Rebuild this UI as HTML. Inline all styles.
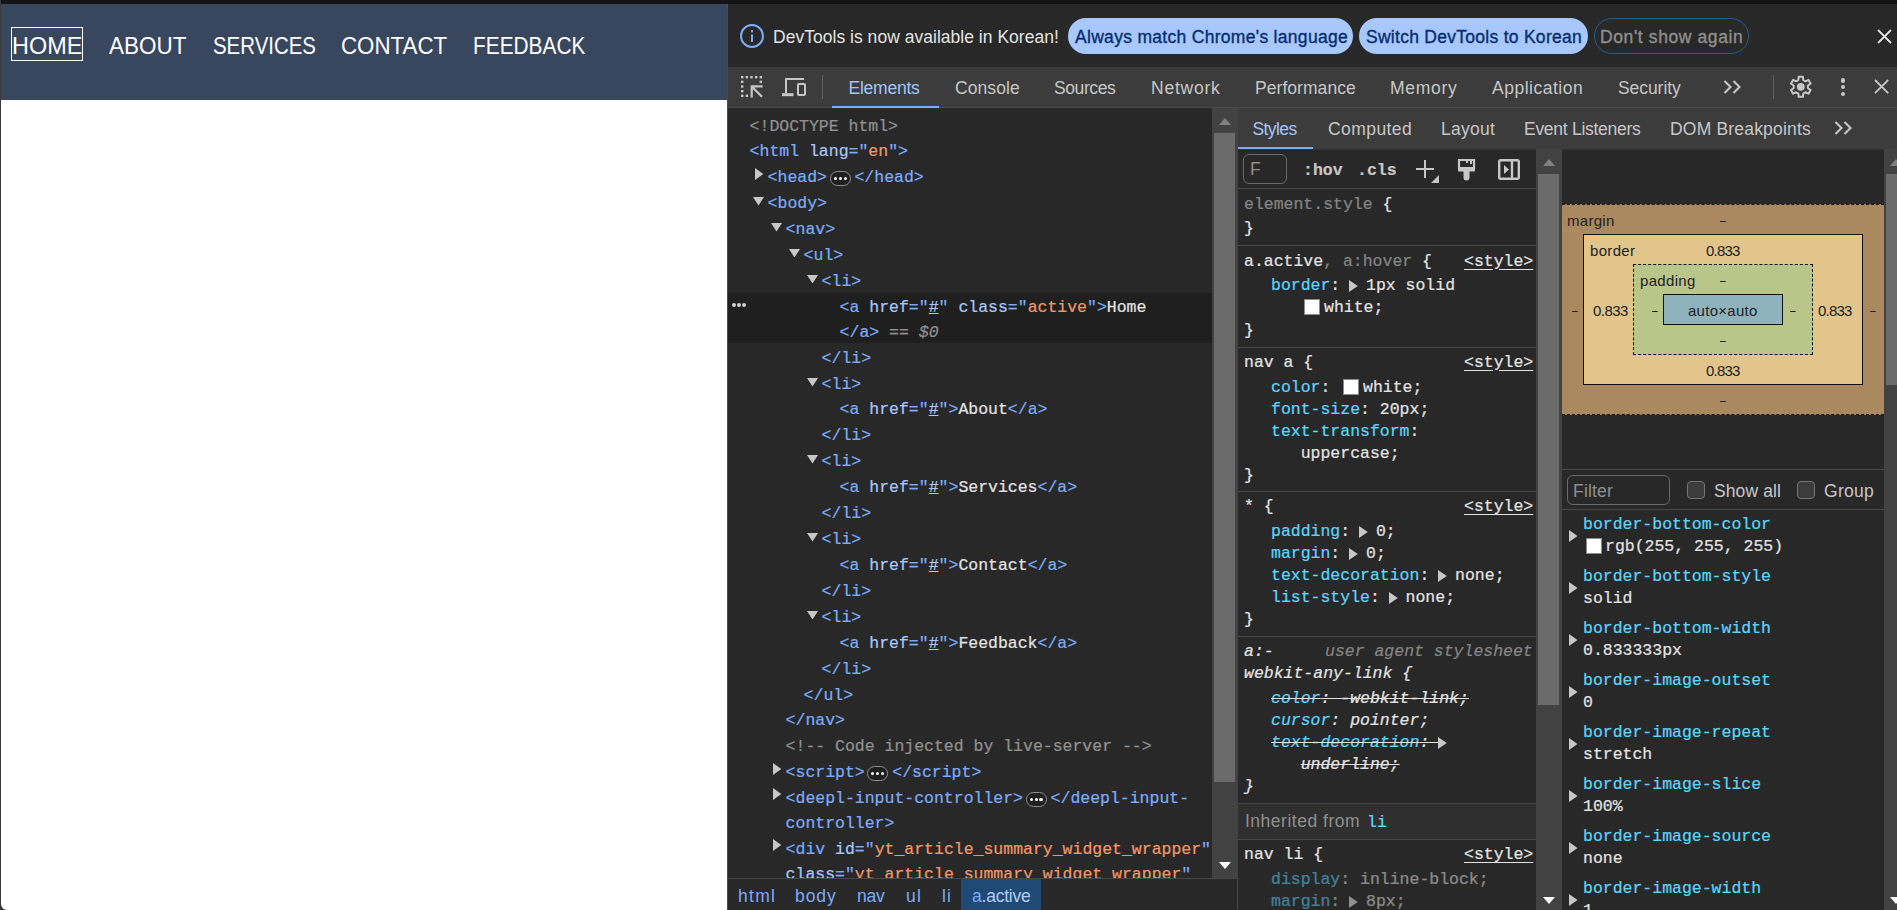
<!DOCTYPE html>
<html lang="en"><head><meta charset="utf-8"><title>Navbar - DevTools</title>
<style>
html,body{margin:0;padding:0;background:#282828;overflow:hidden;}
#r{position:relative;width:1897px;height:910px;overflow:hidden;background:#282828;}
#r div,#r svg{position:absolute;}
#r div.u,#r div.m{white-space:pre;line-height:0;}
#r div.u{font-family:"Liberation Sans", sans-serif;}
#r div.m{font-family:"Liberation Mono", monospace;-webkit-text-stroke:0.22px;}
#r span{white-space:pre;}
</style></head><body><div id="r">
<div style="left:0px;top:0px;width:1897px;height:4px;background:#141414;"></div>
<div style="left:1px;top:4px;width:726px;height:96px;background:#38475e;"></div>
<div style="left:0px;top:900px;width:8px;height:10px;background:#333333;"></div>
<div style="left:1px;top:100px;width:726px;height:810px;background:#ffffff;border-bottom-left-radius:6px;"></div>
<div style="left:0px;top:0px;width:1px;height:910px;background:#3a3a3a;"></div>
<div id="t1" class="u" style="left:11.92px;top:45.68px;font-size:24px;color:#ffffff;transform:scaleX(0.976);transform-origin:0 0;">HOME</div>
<div id="t2" class="u" style="left:109.30px;top:45.68px;font-size:24px;color:#ffffff;transform:scaleX(0.936);transform-origin:0 0;">ABOUT</div>
<div id="t3" class="u" style="left:212.55px;top:45.68px;font-size:24px;color:#ffffff;transform:scaleX(0.851);transform-origin:0 0;">SERVICES</div>
<div id="t4" class="u" style="left:340.57px;top:45.68px;font-size:24px;color:#ffffff;transform:scaleX(0.929);transform-origin:0 0;">CONTACT</div>
<div id="t5" class="u" style="left:472.93px;top:45.68px;font-size:24px;color:#ffffff;transform:scaleX(0.869);transform-origin:0 0;">FEEDBACK</div>
<div style="left:11px;top:27px;width:72px;height:34px;border:1px solid #fff;box-sizing:border-box;"></div>
<div style="left:727px;top:4px;width:1170px;height:906px;background:#282828;"></div>
<div style="left:727px;top:4px;width:1px;height:906px;background:#4a4a4a;"></div>
<svg style="left:739px;top:23px;" width="26" height="26" viewBox="0 0 26 26"><circle cx="13" cy="13" r="11" fill="none" stroke="#7cacf8" stroke-width="2"/><rect x="12" y="11.5" width="2" height="7.5" fill="#7cacf8"/><rect x="12" y="7" width="2" height="2.4" fill="#7cacf8"/></svg>
<div id="t6" class="u" style="left:773.00px;top:36.94px;font-size:17.5px;color:#e3e3e3;letter-spacing:0.024px;">DevTools is now available in Korean!</div>
<div style="left:1068px;top:18px;width:285px;height:36px;background:#a8c7fa;border-radius:18px;"></div>
<div id="t7" class="u" style="left:1075.00px;top:36.94px;font-size:17.5px;color:#062e6f;letter-spacing:0.300px;-webkit-text-stroke:0.35px #062e6f;">Always match Chrome&#x27;s language</div>
<div style="left:1359px;top:18px;width:229px;height:36px;background:#a8c7fa;border-radius:18px;"></div>
<div id="t8" class="u" style="left:1366.00px;top:36.94px;font-size:17.5px;color:#062e6f;letter-spacing:0.275px;-webkit-text-stroke:0.35px #062e6f;">Switch DevTools to Korean</div>
<div style="left:1594px;top:18px;width:155px;height:36px;border-radius:18px;border:1px solid #1d5f96;box-sizing:border-box;"></div>
<div id="t9" class="u" style="left:1600.00px;top:36.94px;font-size:17.5px;color:#8f8f8f;letter-spacing:0.602px;-webkit-text-stroke:0.35px #8f8f8f;">Don&#x27;t show again</div>
<svg style="left:1877.0px;top:29.0px;" width="15.0" height="15.0" viewBox="0 0 15.0 15.0"><path d="M1 1 L14.0 14.0 M14.0 1 L1 14.0" stroke="#e3e3e3" stroke-width="1.8" fill="none"/></svg>
<div style="left:728px;top:67px;width:1169px;height:40px;background:#3c3c3c;"></div>
<div style="left:728px;top:107px;width:1169px;height:1px;background:#4a4a4a;"></div>
<svg style="left:741.2px;top:76.4px;" width="23" height="23" viewBox="0 0 23 23"><rect x="0.00" y="0.00" width="2.4" height="2.4" fill="#c7c7c7"/><rect x="4.65" y="0.00" width="2.4" height="2.4" fill="#c7c7c7"/><rect x="9.30" y="0.00" width="2.4" height="2.4" fill="#c7c7c7"/><rect x="13.95" y="0.00" width="2.4" height="2.4" fill="#c7c7c7"/><rect x="18.60" y="0.00" width="2.4" height="2.4" fill="#c7c7c7"/><rect x="0.00" y="4.65" width="2.4" height="2.4" fill="#c7c7c7"/><rect x="0.00" y="9.30" width="2.4" height="2.4" fill="#c7c7c7"/><rect x="0.00" y="13.95" width="2.4" height="2.4" fill="#c7c7c7"/><rect x="0.00" y="18.60" width="2.4" height="2.4" fill="#c7c7c7"/><rect x="18.60" y="4.65" width="2.4" height="2.4" fill="#c7c7c7"/><rect x="4.65" y="18.60" width="2.4" height="2.4" fill="#c7c7c7"/><path d="M9.6 10.4 H21.6 M10.7 9.3 V21.4 M10.7 10.4 L21 20.8" fill="none" stroke="#c7c7c7" stroke-width="2.2"/></svg>
<svg style="left:782px;top:77px;" width="25" height="21" viewBox="0 0 25 21"><path d="M4 16 V2 H22" fill="none" stroke="#c7c7c7" stroke-width="2"/><path d="M0 17.7 H11.5" stroke="#c7c7c7" stroke-width="3"/>
<rect x="16" y="7" width="7" height="11" rx="1" fill="none" stroke="#c7c7c7" stroke-width="2"/></svg>
<div style="left:822px;top:75px;width:1px;height:24px;background:#5e5e5e;"></div>
<div id="t10" class="u" style="left:848.50px;top:87.94px;font-size:17.5px;color:#a4c4fa;letter-spacing:-0.243px;">Elements</div>
<div id="t11" class="u" style="left:955.00px;top:87.94px;font-size:17.5px;color:#c7c7c7;letter-spacing:0.088px;">Console</div>
<div id="t12" class="u" style="left:1054.00px;top:87.94px;font-size:17.5px;color:#c7c7c7;letter-spacing:-0.408px;">Sources</div>
<div id="t13" class="u" style="left:1151.00px;top:87.94px;font-size:17.5px;color:#c7c7c7;letter-spacing:0.762px;">Network</div>
<div id="t14" class="u" style="left:1255.00px;top:87.94px;font-size:17.5px;color:#c7c7c7;letter-spacing:0.055px;">Performance</div>
<div id="t15" class="u" style="left:1390.00px;top:87.94px;font-size:17.5px;color:#c7c7c7;letter-spacing:0.710px;">Memory</div>
<div id="t16" class="u" style="left:1492.00px;top:87.94px;font-size:17.5px;color:#c7c7c7;letter-spacing:0.512px;">Application</div>
<div id="t17" class="u" style="left:1618.00px;top:87.94px;font-size:17.5px;color:#c7c7c7;letter-spacing:-0.066px;">Security</div>
<div style="left:832px;top:105.5px;width:107px;height:2.5px;background:#7cacf8;"></div>
<svg style="left:1723px;top:80px;" width="19" height="14" viewBox="0 0 19 14"><path d="M1.5 1 L7.5 7 L1.5 13 M10.5 1 L16.5 7 L10.5 13" fill="none" stroke="#c7c7c7" stroke-width="2.1"/></svg>
<div style="left:1773px;top:75px;width:1px;height:24px;background:#5e5e5e;"></div>
<svg style="left:1789.2px;top:75.2px;" width="23.6" height="23.6" viewBox="0 0 23.6 23.6"><path d="M9.40 5.00 L9.65 1.73 L13.95 1.73 L14.20 5.00 L16.48 6.32 L19.45 4.90 L21.60 8.62 L18.89 10.48 L18.89 13.12 L21.60 14.98 L19.45 18.70 L16.48 17.28 L14.20 18.60 L13.95 21.87 L9.65 21.87 L9.40 18.60 L7.12 17.28 L4.15 18.70 L2.00 14.98 L4.71 13.12 L4.71 10.48 L2.00 8.62 L4.15 4.90 L7.12 6.32 Z" fill="none" stroke="#c7c7c7" stroke-width="2" stroke-linejoin="round"/><circle cx="11.8" cy="11.8" r="3.9" fill="#c7c7c7"/></svg>
<div style="left:1840.8px;top:78.2px;width:4.4px;height:4.4px;background:#c7c7c7;border-radius:50%;"></div>
<div style="left:1840.8px;top:84.89999999999999px;width:4.4px;height:4.4px;background:#c7c7c7;border-radius:50%;"></div>
<div style="left:1840.8px;top:91.6px;width:4.4px;height:4.4px;background:#c7c7c7;border-radius:50%;"></div>
<svg style="left:1874.4px;top:79.4px;" width="15.2" height="15.2" viewBox="0 0 15.2 15.2"><path d="M1 1 L14.2 14.2 M14.2 1 L1 14.2" stroke="#c7c7c7" stroke-width="1.8" fill="none"/></svg>
<div style="left:728px;top:293px;width:484px;height:49.6px;background:#1f1f1f;"></div>
<div style="left:731.6px;top:303px;width:4px;height:4px;background:#d0d0d0;border-radius:50%;"></div>
<div style="left:737.0px;top:303px;width:4px;height:4px;background:#d0d0d0;border-radius:50%;"></div>
<div style="left:742.4px;top:303px;width:4px;height:4px;background:#d0d0d0;border-radius:50%;"></div>
<div id="t18" class="m" style="left:749.6px;top:126.60px;font-size:16.49px;color:#e3e3e3;"><span style="color:#919191">&lt;!DOCTYPE html&gt;</span></div>
<div id="t19" class="m" style="left:749.6px;top:152.46px;font-size:16.49px;color:#e3e3e3;"><span style="color:#7cacf8">&lt;html </span><span style="color:#a8c7fa">lang</span><span style="color:#7cacf8">=&quot;</span><span style="color:#ee9868">en</span><span style="color:#7cacf8">&quot;&gt;</span></div>
<div id="t20" class="m" style="left:767.6px;top:178.32px;font-size:16.49px;color:#e3e3e3;"><span style="color:#7cacf8">&lt;head&gt;</span></div>
<svg style="left:755px;top:167.52px;" width="9" height="12" viewBox="0 0 9 12"><path d="M0 0 L8.3 6 L0 12 Z" fill="#c7c7c7"/></svg>
<div style="left:830px;top:170.72px;width:21px;height:15px;background:#1f1f1f;border:1px solid #8f8f8f;border-radius:8px;box-sizing:border-box;"></div>
<div style="left:834.0px;top:176.62px;width:3.2px;height:3.2px;background:#ffffff;border-radius:50%;"></div>
<div style="left:838.9px;top:176.62px;width:3.2px;height:3.2px;background:#ffffff;border-radius:50%;"></div>
<div style="left:843.8px;top:176.62px;width:3.2px;height:3.2px;background:#ffffff;border-radius:50%;"></div>
<div id="t21" class="m" style="left:854.476px;top:178.32px;font-size:16.49px;color:#e3e3e3;"><span style="color:#7cacf8">&lt;/head&gt;</span></div>
<div id="t22" class="m" style="left:767.6px;top:204.18px;font-size:16.49px;color:#e3e3e3;"><span style="color:#7cacf8">&lt;body&gt;</span></div>
<svg style="left:753px;top:197.18px;" width="11" height="8.5" viewBox="0 0 11 8.5"><path d="M0 0 L11 0 L5.5 8.5 Z" fill="#c7c7c7"/></svg>
<div id="t23" class="m" style="left:785.6px;top:230.04px;font-size:16.49px;color:#e3e3e3;"><span style="color:#7cacf8">&lt;nav&gt;</span></div>
<svg style="left:771px;top:223.04000000000002px;" width="11" height="8.5" viewBox="0 0 11 8.5"><path d="M0 0 L11 0 L5.5 8.5 Z" fill="#c7c7c7"/></svg>
<div id="t24" class="m" style="left:803.6px;top:255.90px;font-size:16.49px;color:#e3e3e3;"><span style="color:#7cacf8">&lt;ul&gt;</span></div>
<svg style="left:789px;top:248.90000000000003px;" width="11" height="8.5" viewBox="0 0 11 8.5"><path d="M0 0 L11 0 L5.5 8.5 Z" fill="#c7c7c7"/></svg>
<div id="t25" class="m" style="left:821.6px;top:281.76px;font-size:16.49px;color:#e3e3e3;"><span style="color:#7cacf8">&lt;li&gt;</span></div>
<svg style="left:807px;top:274.76px;" width="11" height="8.5" viewBox="0 0 11 8.5"><path d="M0 0 L11 0 L5.5 8.5 Z" fill="#c7c7c7"/></svg>
<div id="t26" class="m" style="left:839.6px;top:307.62px;font-size:16.49px;color:#e3e3e3;"><span style="color:#7cacf8">&lt;a </span><span style="color:#a8c7fa">href</span><span style="color:#7cacf8">=&quot;</span><span style="color:#a8c7fa;text-decoration:underline">#</span><span style="color:#7cacf8">&quot;</span><span style="color:#7cacf8"> </span><span style="color:#a8c7fa">class</span><span style="color:#7cacf8">=&quot;</span><span style="color:#ee9868">active</span><span style="color:#7cacf8">&quot;&gt;</span><span style="color:#e3e3e3">Home</span></div>
<div id="t27" class="m" style="left:839.6px;top:332.80px;font-size:16.49px;color:#e3e3e3;"><span style="color:#7cacf8">&lt;/a&gt;</span><span style="color:#919191"> == </span><span style="color:#919191;font-style:italic">$0</span></div>
<div id="t28" class="m" style="left:821.6px;top:358.60px;font-size:16.49px;color:#e3e3e3;"><span style="color:#7cacf8">&lt;/li&gt;</span></div>
<div id="t29" class="m" style="left:821.6px;top:384.52px;font-size:16.49px;color:#e3e3e3;"><span style="color:#7cacf8">&lt;li&gt;</span></div>
<svg style="left:807px;top:377.52000000000004px;" width="11" height="8.5" viewBox="0 0 11 8.5"><path d="M0 0 L11 0 L5.5 8.5 Z" fill="#c7c7c7"/></svg>
<div id="t30" class="m" style="left:839.6px;top:410.44px;font-size:16.49px;color:#e3e3e3;"><span style="color:#7cacf8">&lt;a </span><span style="color:#a8c7fa">href</span><span style="color:#7cacf8">=&quot;</span><span style="color:#a8c7fa;text-decoration:underline">#</span><span style="color:#7cacf8">&quot;</span><span style="color:#7cacf8">&gt;</span><span style="color:#e3e3e3">About</span><span style="color:#7cacf8">&lt;/a&gt;</span></div>
<div id="t31" class="m" style="left:821.6px;top:436.36px;font-size:16.49px;color:#e3e3e3;"><span style="color:#7cacf8">&lt;/li&gt;</span></div>
<div id="t32" class="m" style="left:821.6px;top:462.28px;font-size:16.49px;color:#e3e3e3;"><span style="color:#7cacf8">&lt;li&gt;</span></div>
<svg style="left:807px;top:455.28000000000003px;" width="11" height="8.5" viewBox="0 0 11 8.5"><path d="M0 0 L11 0 L5.5 8.5 Z" fill="#c7c7c7"/></svg>
<div id="t33" class="m" style="left:839.6px;top:488.20px;font-size:16.49px;color:#e3e3e3;"><span style="color:#7cacf8">&lt;a </span><span style="color:#a8c7fa">href</span><span style="color:#7cacf8">=&quot;</span><span style="color:#a8c7fa;text-decoration:underline">#</span><span style="color:#7cacf8">&quot;</span><span style="color:#7cacf8">&gt;</span><span style="color:#e3e3e3">Services</span><span style="color:#7cacf8">&lt;/a&gt;</span></div>
<div id="t34" class="m" style="left:821.6px;top:514.12px;font-size:16.49px;color:#e3e3e3;"><span style="color:#7cacf8">&lt;/li&gt;</span></div>
<div id="t35" class="m" style="left:821.6px;top:540.04px;font-size:16.49px;color:#e3e3e3;"><span style="color:#7cacf8">&lt;li&gt;</span></div>
<svg style="left:807px;top:533.04px;" width="11" height="8.5" viewBox="0 0 11 8.5"><path d="M0 0 L11 0 L5.5 8.5 Z" fill="#c7c7c7"/></svg>
<div id="t36" class="m" style="left:839.6px;top:565.96px;font-size:16.49px;color:#e3e3e3;"><span style="color:#7cacf8">&lt;a </span><span style="color:#a8c7fa">href</span><span style="color:#7cacf8">=&quot;</span><span style="color:#a8c7fa;text-decoration:underline">#</span><span style="color:#7cacf8">&quot;</span><span style="color:#7cacf8">&gt;</span><span style="color:#e3e3e3">Contact</span><span style="color:#7cacf8">&lt;/a&gt;</span></div>
<div id="t37" class="m" style="left:821.6px;top:591.88px;font-size:16.49px;color:#e3e3e3;"><span style="color:#7cacf8">&lt;/li&gt;</span></div>
<div id="t38" class="m" style="left:821.6px;top:617.80px;font-size:16.49px;color:#e3e3e3;"><span style="color:#7cacf8">&lt;li&gt;</span></div>
<svg style="left:807px;top:610.8px;" width="11" height="8.5" viewBox="0 0 11 8.5"><path d="M0 0 L11 0 L5.5 8.5 Z" fill="#c7c7c7"/></svg>
<div id="t39" class="m" style="left:839.6px;top:643.72px;font-size:16.49px;color:#e3e3e3;"><span style="color:#7cacf8">&lt;a </span><span style="color:#a8c7fa">href</span><span style="color:#7cacf8">=&quot;</span><span style="color:#a8c7fa;text-decoration:underline">#</span><span style="color:#7cacf8">&quot;</span><span style="color:#7cacf8">&gt;</span><span style="color:#e3e3e3">Feedback</span><span style="color:#7cacf8">&lt;/a&gt;</span></div>
<div id="t40" class="m" style="left:821.6px;top:669.64px;font-size:16.49px;color:#e3e3e3;"><span style="color:#7cacf8">&lt;/li&gt;</span></div>
<div id="t41" class="m" style="left:803.6px;top:695.56px;font-size:16.49px;color:#e3e3e3;"><span style="color:#7cacf8">&lt;/ul&gt;</span></div>
<div id="t42" class="m" style="left:785.6px;top:721.48px;font-size:16.49px;color:#e3e3e3;"><span style="color:#7cacf8">&lt;/nav&gt;</span></div>
<div id="t43" class="m" style="left:785.6px;top:747.40px;font-size:16.49px;color:#e3e3e3;"><span style="color:#919191">&lt;!-- Code injected by live-server --&gt;</span></div>
<div id="t44" class="m" style="left:785.6px;top:773.32px;font-size:16.49px;color:#e3e3e3;"><span style="color:#7cacf8">&lt;script&gt;</span></div>
<svg style="left:773px;top:762.52px;" width="9" height="12" viewBox="0 0 9 12"><path d="M0 0 L8.3 6 L0 12 Z" fill="#c7c7c7"/></svg>
<div style="left:867.268px;top:765.72px;width:21px;height:15px;background:#1f1f1f;border:1px solid #8f8f8f;border-radius:8px;box-sizing:border-box;"></div>
<div style="left:871.268px;top:771.62px;width:3.2px;height:3.2px;background:#ffffff;border-radius:50%;"></div>
<div style="left:876.168px;top:771.62px;width:3.2px;height:3.2px;background:#ffffff;border-radius:50%;"></div>
<div style="left:881.068px;top:771.62px;width:3.2px;height:3.2px;background:#ffffff;border-radius:50%;"></div>
<div id="t45" class="m" style="left:892.268px;top:773.32px;font-size:16.49px;color:#e3e3e3;"><span style="color:#7cacf8">&lt;/script&gt;</span></div>
<div id="t46" class="m" style="left:785.6px;top:799.24px;font-size:16.49px;color:#e3e3e3;"><span style="color:#7cacf8">&lt;deepl-input-controller&gt;</span></div>
<svg style="left:773px;top:788.44px;" width="9" height="12" viewBox="0 0 9 12"><path d="M0 0 L8.3 6 L0 12 Z" fill="#c7c7c7"/></svg>
<div style="left:1025.604px;top:791.6400000000001px;width:21px;height:15px;background:#1f1f1f;border:1px solid #8f8f8f;border-radius:8px;box-sizing:border-box;"></div>
<div style="left:1029.604px;top:797.5400000000001px;width:3.2px;height:3.2px;background:#ffffff;border-radius:50%;"></div>
<div style="left:1034.5040000000001px;top:797.5400000000001px;width:3.2px;height:3.2px;background:#ffffff;border-radius:50%;"></div>
<div style="left:1039.404px;top:797.5400000000001px;width:3.2px;height:3.2px;background:#ffffff;border-radius:50%;"></div>
<div id="t47" class="m" style="left:1050.604px;top:799.24px;font-size:16.49px;color:#e3e3e3;"><span style="color:#7cacf8">&lt;/deepl-input-</span></div>
<div id="t48" class="m" style="left:785.6px;top:824.34px;font-size:16.49px;color:#e3e3e3;"><span style="color:#7cacf8">controller&gt;</span></div>
<div id="t49" class="m" style="left:785.6px;top:850.24px;font-size:16.49px;color:#e3e3e3;"><span style="color:#7cacf8">&lt;div </span><span style="color:#a8c7fa">id</span><span style="color:#7cacf8">=&quot;</span><span style="color:#ee9868">yt_article_summary_widget_wrapper</span><span style="color:#7cacf8">&quot;</span></div>
<svg style="left:773px;top:839.44px;" width="9" height="12" viewBox="0 0 9 12"><path d="M0 0 L8.3 6 L0 12 Z" fill="#c7c7c7"/></svg>
<div id="t50" class="m" style="left:785.6px;top:875.34px;font-size:16.49px;color:#e3e3e3;"><span style="color:#a8c7fa">class</span><span style="color:#7cacf8">=&quot;</span><span style="color:#ee9868">yt_article_summary_widget_wrapper</span><span style="color:#7cacf8">&quot;</span></div>
<div style="left:1212px;top:108px;width:26px;height:770px;background:#424242;"></div>
<div style="left:1214px;top:133px;width:21px;height:649px;background:#6b6b6b;"></div>
<svg style="left:1218.5px;top:117.5px;" width="12" height="7" viewBox="0 0 12 7"><path d="M0 7 L6 0 L12 7 Z" fill="#808080"/></svg>
<svg style="left:1218.5px;top:861.5px;" width="12" height="7" viewBox="0 0 12 7"><path d="M0 0 L6 7 L12 0 Z" fill="#ffffff"/></svg>
<div style="left:728px;top:878px;width:510px;height:32px;background:#282828;"></div>
<div style="left:728px;top:878px;width:510px;height:1px;background:#474747;"></div>
<div style="left:1237px;top:878px;width:1px;height:32px;background:#474747;"></div>
<div style="left:961px;top:879px;width:80px;height:31px;background:#1f4a75;"></div>
<div id="t51" class="u" style="left:738.00px;top:895.94px;font-size:17.5px;color:#7cacf8;letter-spacing:1.276px;">html</div>
<div id="t52" class="u" style="left:795.00px;top:895.94px;font-size:17.5px;color:#7cacf8;letter-spacing:0.934px;">body</div>
<div id="t53" class="u" style="left:857.00px;top:895.94px;font-size:17.5px;color:#7cacf8;letter-spacing:-0.233px;">nav</div>
<div id="t54" class="u" style="left:906.00px;top:895.94px;font-size:17.5px;color:#7cacf8;letter-spacing:1.267px;">ul</div>
<div id="t55" class="u" style="left:942.00px;top:895.94px;font-size:17.5px;color:#7cacf8;letter-spacing:1.112px;">li</div>
<div id="t56" class="u" style="left:972.00px;top:896.44px;font-size:17.5px;color:#b4cdf5;letter-spacing:-0.225px;"><span style="color:#7cacf8">a</span>.active</div>
<div style="left:1238px;top:108px;width:659px;height:41px;background:#3c3c3c;"></div>
<div style="left:1238px;top:149px;width:659px;height:1px;background:#333333;"></div>
<div id="t57" class="u" style="left:1252.50px;top:128.94px;font-size:17.5px;color:#a4c4fa;letter-spacing:-0.581px;">Styles</div>
<div id="t58" class="u" style="left:1328.00px;top:128.94px;font-size:17.5px;color:#c7c7c7;letter-spacing:0.427px;">Computed</div>
<div id="t59" class="u" style="left:1441.00px;top:128.94px;font-size:17.5px;color:#c7c7c7;letter-spacing:0.264px;">Layout</div>
<div id="t60" class="u" style="left:1524.00px;top:128.94px;font-size:17.5px;color:#c7c7c7;letter-spacing:-0.276px;">Event Listeners</div>
<div id="t61" class="u" style="left:1670.00px;top:128.94px;font-size:17.5px;color:#c7c7c7;letter-spacing:0.189px;">DOM Breakpoints</div>
<div style="left:1238px;top:146.5px;width:75px;height:2.5px;background:#7cacf8;"></div>
<svg style="left:1834px;top:121px;" width="19" height="14" viewBox="0 0 19 14"><path d="M1.5 1 L7.5 7 L1.5 13 M10.5 1 L16.5 7 L10.5 13" fill="none" stroke="#c7c7c7" stroke-width="2.1"/></svg>
<div style="left:1243px;top:154px;width:44px;height:30px;border:1px solid #6a6a6a;border-radius:6px;box-sizing:border-box;"></div>
<div id="t62" class="u" style="left:1250px;top:169.44px;font-size:17.5px;color:#8f8f8f;">F</div>
<div id="t63" class="m" style="left:1303px;top:171.10px;font-size:16.49px;color:#c7c7c7;font-weight:bold;">:hov</div>
<div id="t64" class="m" style="left:1357px;top:171.10px;font-size:16.49px;color:#c7c7c7;font-weight:bold;">.cls</div>
<svg style="left:1415px;top:159px;" width="26" height="25" viewBox="0 0 26 25"><path d="M10 1 V19 M1 10 H19" stroke="#c7c7c7" stroke-width="2" fill="none"/><path d="M24 16 V24 H16 Z" fill="#c7c7c7"/></svg>
<svg style="left:1457px;top:158px;" width="20" height="24" viewBox="0 0 20 24"><path d="M2 2 H17 V10 H2 Z" fill="none" stroke="#c7c7c7" stroke-width="2.2"/><path d="M10 2 V5 M14 2 V6" stroke="#c7c7c7" stroke-width="2"/>
<path d="M2 10 V12.5 H7.5 V19.5 a2 2 0 0 0 4 0 V12.5 H17 V10" fill="#c7c7c7" stroke="#c7c7c7" stroke-width="2" stroke-linejoin="round"/></svg>
<svg style="left:1498px;top:159px;" width="22" height="21" viewBox="0 0 22 21"><rect x="1.2" y="1.2" width="19.6" height="18.6" rx="1.5" fill="none" stroke="#c7c7c7" stroke-width="2.4"/><path d="M14 1 V20" stroke="#c7c7c7" stroke-width="2.4"/><path d="M6 6 L11 10.5 L6 15 Z" fill="#c7c7c7"/></svg>
<div style="left:1238px;top:188px;width:299px;height:1px;background:#474747;"></div>
<div id="t65" class="m" style="left:1244px;top:204.60px;font-size:16.49px;color:#e3e3e3;"><span style="color:#858585">element.style </span><span style="color:#e3e3e3">{</span></div>
<div id="t66" class="m" style="left:1244px;top:229.10px;font-size:16.49px;color:#e3e3e3;"><span style="color:#e3e3e3">}</span></div>
<div style="left:1238px;top:245px;width:299px;height:1px;background:#474747;"></div>
<div id="t67" class="m" style="left:1244px;top:261.60px;font-size:16.49px;color:#e3e3e3;"><span style="color:#e3e3e3">a.active</span><span style="color:#858585">, a:hover </span><span style="color:#e3e3e3">{</span></div>
<div id="t68" class="m" style="left:1464px;top:261.60px;font-size:16.49px;color:#e3e3e3;text-decoration:underline;text-underline-offset:2.5px;">&lt;style&gt;</div>
<div id="t69" class="m" style="left:1271px;top:286.10px;font-size:16.49px;color:#e3e3e3;"><span style="color:#5cd5fb">border</span><span style="color:#e3e3e3">: </span></div>
<svg style="left:1349px;top:279.9px;" width="9" height="12" viewBox="0 0 9 12"><path d="M0 0 L8.8 6 L0 12 Z" fill="#c7c7c7"/></svg>
<div id="t70" class="m" style="left:1366.0016px;top:286.10px;font-size:16.49px;color:#e3e3e3;"><span style="color:#e3e3e3">1px solid</span></div>
<div style="left:1304.3px;top:299.0px;width:16px;height:16px;background:#ffffff;border:1px solid #8a8a8a;box-sizing:border-box;"></div>
<div id="t71" class="m" style="left:1324px;top:308.10px;font-size:16.49px;color:#e3e3e3;"><span style="color:#e3e3e3">white;</span></div>
<div id="t72" class="m" style="left:1244px;top:330.60px;font-size:16.49px;color:#e3e3e3;"><span style="color:#e3e3e3">}</span></div>
<div style="left:1238px;top:347px;width:299px;height:1px;background:#474747;"></div>
<div id="t73" class="m" style="left:1244px;top:362.60px;font-size:16.49px;color:#e3e3e3;"><span style="color:#e3e3e3">nav a </span><span style="color:#e3e3e3">{</span></div>
<div id="t74" class="m" style="left:1464px;top:362.60px;font-size:16.49px;color:#e3e3e3;text-decoration:underline;text-underline-offset:2.5px;">&lt;style&gt;</div>
<div id="t75" class="m" style="left:1271px;top:387.60px;font-size:16.49px;color:#e3e3e3;"><span style="color:#5cd5fb">color</span><span style="color:#e3e3e3">: </span></div>
<div style="left:1343.3px;top:378.5px;width:16px;height:16px;background:#ffffff;border:1px solid #8a8a8a;box-sizing:border-box;"></div>
<div id="t76" class="m" style="left:1363px;top:387.60px;font-size:16.49px;color:#e3e3e3;"><span style="color:#e3e3e3">white;</span></div>
<div id="t77" class="m" style="left:1271px;top:409.60px;font-size:16.49px;color:#e3e3e3;"><span style="color:#5cd5fb">font-size</span><span style="color:#e3e3e3">: 20px;</span></div>
<div id="t78" class="m" style="left:1271px;top:431.60px;font-size:16.49px;color:#e3e3e3;"><span style="color:#5cd5fb">text-transform</span><span style="color:#e3e3e3">:</span></div>
<div id="t79" class="m" style="left:1300.688px;top:453.60px;font-size:16.49px;color:#e3e3e3;"><span style="color:#e3e3e3">uppercase;</span></div>
<div id="t80" class="m" style="left:1244px;top:475.60px;font-size:16.49px;color:#e3e3e3;"><span style="color:#e3e3e3">}</span></div>
<div style="left:1238px;top:491px;width:299px;height:1px;background:#474747;"></div>
<div id="t81" class="m" style="left:1244px;top:507.10px;font-size:16.49px;color:#e3e3e3;"><span style="color:#e3e3e3">* {</span></div>
<div id="t82" class="m" style="left:1464px;top:507.10px;font-size:16.49px;color:#e3e3e3;text-decoration:underline;text-underline-offset:2.5px;">&lt;style&gt;</div>
<div id="t83" class="m" style="left:1271px;top:532.10px;font-size:16.49px;color:#e3e3e3;"><span style="color:#5cd5fb">padding</span><span style="color:#e3e3e3">: </span></div>
<svg style="left:1359.064px;top:525.9px;" width="9" height="12" viewBox="0 0 9 12"><path d="M0 0 L8.8 6 L0 12 Z" fill="#c7c7c7"/></svg>
<div id="t84" class="m" style="left:1375.8976px;top:532.10px;font-size:16.49px;color:#e3e3e3;"><span style="color:#e3e3e3">0;</span></div>
<div id="t85" class="m" style="left:1271px;top:554.10px;font-size:16.49px;color:#e3e3e3;"><span style="color:#5cd5fb">margin</span><span style="color:#e3e3e3">: </span></div>
<svg style="left:1349.1680000000001px;top:547.9px;" width="9" height="12" viewBox="0 0 9 12"><path d="M0 0 L8.8 6 L0 12 Z" fill="#c7c7c7"/></svg>
<div id="t86" class="m" style="left:1366.0016px;top:554.10px;font-size:16.49px;color:#e3e3e3;"><span style="color:#e3e3e3">0;</span></div>
<div id="t87" class="m" style="left:1271px;top:576.10px;font-size:16.49px;color:#e3e3e3;"><span style="color:#5cd5fb">text-decoration</span><span style="color:#e3e3e3">: </span></div>
<svg style="left:1438.232px;top:569.9px;" width="9" height="12" viewBox="0 0 9 12"><path d="M0 0 L8.8 6 L0 12 Z" fill="#c7c7c7"/></svg>
<div id="t88" class="m" style="left:1455.0656px;top:576.10px;font-size:16.49px;color:#e3e3e3;"><span style="color:#e3e3e3">none;</span></div>
<div id="t89" class="m" style="left:1271px;top:598.10px;font-size:16.49px;color:#e3e3e3;"><span style="color:#5cd5fb">list-style</span><span style="color:#e3e3e3">: </span></div>
<svg style="left:1388.752px;top:591.9px;" width="9" height="12" viewBox="0 0 9 12"><path d="M0 0 L8.8 6 L0 12 Z" fill="#c7c7c7"/></svg>
<div id="t90" class="m" style="left:1405.5855999999999px;top:598.10px;font-size:16.49px;color:#e3e3e3;"><span style="color:#e3e3e3">none;</span></div>
<div id="t91" class="m" style="left:1244px;top:620.10px;font-size:16.49px;color:#e3e3e3;"><span style="color:#e3e3e3">}</span></div>
<div style="left:1238px;top:636px;width:299px;height:1px;background:#474747;"></div>
<div id="t92" class="m" style="left:1244px;top:652.10px;font-size:16.49px;color:#e3e3e3;font-style:italic;"><span style="color:#e3e3e3">a:-</span></div>
<div id="t93" class="m" style="left:1325px;top:652.10px;font-size:16.49px;color:#858585;font-style:italic;">user agent stylesheet</div>
<div id="t94" class="m" style="left:1244px;top:674.10px;font-size:16.49px;color:#e3e3e3;font-style:italic;"><span style="color:#e3e3e3">webkit-any-link {</span></div>
<div id="t95" class="m" style="left:1271px;top:699.10px;font-size:16.49px;color:#e3e3e3;font-style:italic;text-decoration:line-through;text-decoration-color:#e3e3e3;"><span style="color:#5cd5fb">color</span><span style="color:#e3e3e3">: -webkit-link;</span></div>
<div id="t96" class="m" style="left:1271px;top:721.10px;font-size:16.49px;color:#e3e3e3;font-style:italic;"><span style="color:#5cd5fb">cursor</span><span style="color:#e3e3e3">: pointer;</span></div>
<div id="t97" class="m" style="left:1271px;top:743.10px;font-size:16.49px;color:#e3e3e3;font-style:italic;text-decoration:line-through;text-decoration-color:#e3e3e3;"><span style="color:#5cd5fb">text-decoration</span><span style="color:#e3e3e3">: </span></div>
<svg style="left:1438.232px;top:736.9px;" width="9" height="12" viewBox="0 0 9 12"><path d="M0 0 L8.8 6 L0 12 Z" fill="#c7c7c7"/></svg>
<div id="t98" class="m" style="left:1300.688px;top:765.10px;font-size:16.49px;color:#e3e3e3;font-style:italic;text-decoration:line-through;"><span style="color:#e3e3e3">underline;</span></div>
<div id="t99" class="m" style="left:1244px;top:787.10px;font-size:16.49px;color:#e3e3e3;font-style:italic;"><span style="color:#e3e3e3">}</span></div>
<div style="left:1238px;top:803px;width:299px;height:1px;background:#474747;"></div>
<div style="left:1238px;top:804px;width:299px;height:35px;background:#2f2f2f;"></div>
<div id="t100" class="u" style="left:1245.00px;top:820.94px;font-size:17.5px;color:#8f8f8f;letter-spacing:0.509px;">Inherited from</div>
<div id="t101" class="m" style="left:1367px;top:823.10px;font-size:16.49px;color:#5cd5fb;">li</div>
<div style="left:1238px;top:839px;width:299px;height:1px;background:#474747;"></div>
<div id="t102" class="m" style="left:1244px;top:855.10px;font-size:16.49px;color:#e3e3e3;"><span style="color:#e3e3e3">nav li {</span></div>
<div id="t103" class="m" style="left:1464px;top:855.10px;font-size:16.49px;color:#e3e3e3;text-decoration:underline;text-underline-offset:2.5px;">&lt;style&gt;</div>
<div id="t104" class="m" style="left:1271px;top:880.10px;font-size:16.49px;color:#e3e3e3;opacity:0.52;"><span style="color:#5cd5fb">display</span><span style="color:#e3e3e3">: inline-block;</span></div>
<div id="t105" class="m" style="left:1271px;top:902.10px;font-size:16.49px;color:#e3e3e3;opacity:0.52;"><span style="color:#5cd5fb">margin</span><span style="color:#e3e3e3">: </span></div>
<svg style="left:1349.1680000000001px;top:895.9px;" width="9" height="12" viewBox="0 0 9 12"><path d="M0 0 L8.8 6 L0 12 Z" fill="#8f8f8f"/></svg>
<div id="t106" class="m" style="left:1366.0016px;top:902.10px;font-size:16.49px;color:#e3e3e3;opacity:0.52;"><span style="color:#e3e3e3">8px;</span></div>
<div style="left:1536px;top:149px;width:26px;height:761px;background:#424242;"></div>
<div style="left:1538px;top:174px;width:21px;height:531px;background:#6b6b6b;"></div>
<svg style="left:1543px;top:158.5px;" width="12" height="7" viewBox="0 0 12 7"><path d="M0 7 L6 0 L12 7 Z" fill="#808080"/></svg>
<svg style="left:1543px;top:897px;" width="12" height="7" viewBox="0 0 12 7"><path d="M0 0 L6 7 L12 0 Z" fill="#ffffff"/></svg>
<div style="left:1562px;top:204px;width:322px;height:211px;background:#ab8960;border-top:1px dashed #111;border-bottom:1px dashed #111;box-sizing:border-box;"></div>
<div style="left:1583px;top:234px;width:280px;height:151px;background:#e1c58b;border:1px solid #111;box-sizing:border-box;"></div>
<div style="left:1633px;top:264px;width:180px;height:91px;background:#b9c589;border:1px dashed #111;box-sizing:border-box;"></div>
<div style="left:1663px;top:294px;width:120px;height:31px;background:#8fb3bd;border:1px solid #111;box-sizing:border-box;"></div>
<div id="t107" class="u" style="left:1567.00px;top:220.80px;font-size:15px;color:#202124;letter-spacing:0.299px;">margin</div>
<div id="t108" class="u" style="left:1590.00px;top:250.80px;font-size:15px;color:#202124;letter-spacing:0.327px;">border</div>
<div id="t109" class="u" style="left:1640.00px;top:280.80px;font-size:15px;color:#202124;letter-spacing:0.326px;">padding</div>
<div id="t110" class="u" style="left:1706.00px;top:250.80px;font-size:15px;color:#202124;letter-spacing:-0.799px;">0.833</div>
<div id="t111" class="u" style="left:1706.00px;top:370.80px;font-size:15px;color:#202124;letter-spacing:-0.799px;">0.833</div>
<div id="t112" class="u" style="left:1593.00px;top:310.80px;font-size:15px;color:#202124;letter-spacing:-0.549px;">0.833</div>
<div id="t113" class="u" style="left:1818.00px;top:310.80px;font-size:15px;color:#202124;letter-spacing:-0.799px;">0.833</div>
<div id="t114" class="u" style="left:1688.00px;top:310.80px;font-size:15px;color:#202124;letter-spacing:0.274px;">auto×auto</div>
<div id="t115" class="u" style="left:1720.00px;top:219.50px;font-size:15px;color:#202124;transform:scaleX(0.667);transform-origin:0 0;">–</div>
<div id="t116" class="u" style="left:1720.00px;top:279.50px;font-size:15px;color:#202124;transform:scaleX(0.667);transform-origin:0 0;">–</div>
<div id="t117" class="u" style="left:1720.00px;top:339.50px;font-size:15px;color:#202124;transform:scaleX(0.667);transform-origin:0 0;">–</div>
<div id="t118" class="u" style="left:1720.00px;top:399.50px;font-size:15px;color:#202124;transform:scaleX(0.667);transform-origin:0 0;">–</div>
<div id="t119" class="u" style="left:1572.00px;top:309.50px;font-size:15px;color:#202124;transform:scaleX(0.667);transform-origin:0 0;">–</div>
<div id="t120" class="u" style="left:1652.00px;top:309.50px;font-size:15px;color:#202124;transform:scaleX(0.667);transform-origin:0 0;">–</div>
<div id="t121" class="u" style="left:1790.00px;top:309.50px;font-size:15px;color:#202124;transform:scaleX(0.667);transform-origin:0 0;">–</div>
<div id="t122" class="u" style="left:1870.00px;top:309.50px;font-size:15px;color:#202124;transform:scaleX(0.667);transform-origin:0 0;">–</div>
<div style="left:1562px;top:469px;width:322px;height:1px;background:#474747;"></div>
<div style="left:1562px;top:509px;width:322px;height:1px;background:#474747;"></div>
<div style="left:1567px;top:475px;width:103px;height:30px;border:1px solid #6a6a6a;border-radius:6px;box-sizing:border-box;"></div>
<div id="t123" class="u" style="left:1573.00px;top:490.94px;font-size:17.5px;color:#8f8f8f;letter-spacing:0.188px;">Filter</div>
<div style="left:1687px;top:481px;width:18px;height:18px;background:#3c3c3c;border:1.5px solid #757575;border-radius:4px;box-sizing:border-box;"></div>
<div id="t124" class="u" style="left:1714.00px;top:490.94px;font-size:17.5px;color:#c7c7c7;letter-spacing:0.106px;">Show all</div>
<div style="left:1797px;top:481px;width:18px;height:18px;background:#3c3c3c;border:1.5px solid #757575;border-radius:4px;box-sizing:border-box;"></div>
<div id="t125" class="u" style="left:1824.00px;top:490.94px;font-size:17.5px;color:#c7c7c7;letter-spacing:0.274px;">Group</div>
<div id="t126" class="m" style="left:1583px;top:524.60px;font-size:16.49px;color:#5cd5fb;">border-bottom-color</div>
<svg style="left:1569px;top:529.5px;" width="9" height="12" viewBox="0 0 9 12"><path d="M0 0 L8.5 6 L0 12 Z" fill="#c7c7c7"/></svg>
<div style="left:1586px;top:537.5px;width:16px;height:16px;background:#ffffff;border:1px solid #8a8a8a;box-sizing:border-box;"></div>
<div id="t127" class="m" style="left:1605px;top:546.60px;font-size:16.49px;color:#e3e3e3;">rgb(255, 255, 255)</div>
<div id="t128" class="m" style="left:1583px;top:576.60px;font-size:16.49px;color:#5cd5fb;">border-bottom-style</div>
<svg style="left:1569px;top:581.5px;" width="9" height="12" viewBox="0 0 9 12"><path d="M0 0 L8.5 6 L0 12 Z" fill="#c7c7c7"/></svg>
<div id="t129" class="m" style="left:1583px;top:598.60px;font-size:16.49px;color:#e3e3e3;">solid</div>
<div id="t130" class="m" style="left:1583px;top:628.60px;font-size:16.49px;color:#5cd5fb;">border-bottom-width</div>
<svg style="left:1569px;top:633.5px;" width="9" height="12" viewBox="0 0 9 12"><path d="M0 0 L8.5 6 L0 12 Z" fill="#c7c7c7"/></svg>
<div id="t131" class="m" style="left:1583px;top:650.60px;font-size:16.49px;color:#e3e3e3;">0.833333px</div>
<div id="t132" class="m" style="left:1583px;top:680.60px;font-size:16.49px;color:#5cd5fb;">border-image-outset</div>
<svg style="left:1569px;top:685.5px;" width="9" height="12" viewBox="0 0 9 12"><path d="M0 0 L8.5 6 L0 12 Z" fill="#c7c7c7"/></svg>
<div id="t133" class="m" style="left:1583px;top:702.60px;font-size:16.49px;color:#e3e3e3;">0</div>
<div id="t134" class="m" style="left:1583px;top:732.60px;font-size:16.49px;color:#5cd5fb;">border-image-repeat</div>
<svg style="left:1569px;top:737.5px;" width="9" height="12" viewBox="0 0 9 12"><path d="M0 0 L8.5 6 L0 12 Z" fill="#c7c7c7"/></svg>
<div id="t135" class="m" style="left:1583px;top:754.60px;font-size:16.49px;color:#e3e3e3;">stretch</div>
<div id="t136" class="m" style="left:1583px;top:784.60px;font-size:16.49px;color:#5cd5fb;">border-image-slice</div>
<svg style="left:1569px;top:789.5px;" width="9" height="12" viewBox="0 0 9 12"><path d="M0 0 L8.5 6 L0 12 Z" fill="#c7c7c7"/></svg>
<div id="t137" class="m" style="left:1583px;top:806.60px;font-size:16.49px;color:#e3e3e3;">100%</div>
<div id="t138" class="m" style="left:1583px;top:836.60px;font-size:16.49px;color:#5cd5fb;">border-image-source</div>
<svg style="left:1569px;top:841.5px;" width="9" height="12" viewBox="0 0 9 12"><path d="M0 0 L8.5 6 L0 12 Z" fill="#c7c7c7"/></svg>
<div id="t139" class="m" style="left:1583px;top:858.60px;font-size:16.49px;color:#e3e3e3;">none</div>
<div id="t140" class="m" style="left:1583px;top:888.60px;font-size:16.49px;color:#5cd5fb;">border-image-width</div>
<svg style="left:1569px;top:893.5px;" width="9" height="12" viewBox="0 0 9 12"><path d="M0 0 L8.5 6 L0 12 Z" fill="#c7c7c7"/></svg>
<div id="t141" class="m" style="left:1583px;top:910.60px;font-size:16.49px;color:#e3e3e3;">1</div>
<div style="left:1884px;top:149px;width:13px;height:761px;background:#424242;"></div>
<div style="left:1886px;top:174px;width:11px;height:211px;background:#6b6b6b;"></div>
<svg style="left:1890px;top:158.5px;" width="7" height="7" viewBox="0 0 7 7"><path d="M0 7 L6 0 L7 1.2 V7 Z" fill="#808080"/></svg>
<svg style="left:1890px;top:897px;" width="7" height="7" viewBox="0 0 7 7"><path d="M0 0 L6 7 L7 5.8 V0 Z" fill="#ffffff"/></svg>
</div></body></html>
